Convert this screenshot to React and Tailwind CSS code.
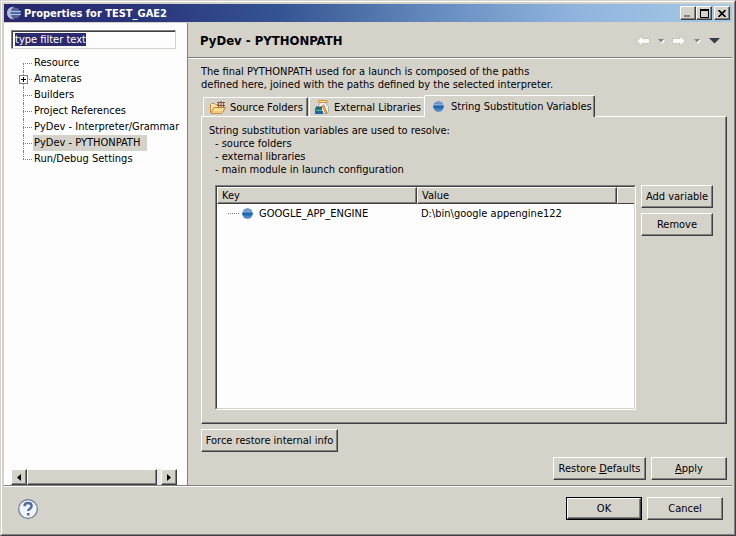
import React from "react";

const FACE = "bg-[#d5d2ca] border border-t-white border-l-white border-r-[#404040] border-b-[#404040] shadow-[inset_-1px_-1px_0_#808080]";

function Button({ children, className = "" }) {
  return (
    <button type="button" className={`${FACE} h-[23px] text-center leading-[13px] whitespace-nowrap ${className}`}>
      {children}
    </button>
  );
}

function EclipseLogo() {
  return (
    <svg width="14" height="14" viewBox="0 0 14 14" aria-hidden="true">
      <circle cx="8" cy="7" r="5.500" fill="#5a6199" />
      <path d="M7.500 0.500C3 0.500 0 3.300 0 7s3 6.500 7.500 6.500C4.800 12 3.800 9.600 3.800 7S4.800 2 7.500 .5z" fill="#b9bbd2" />
      <path d="M3 5.500h11M3 8.500h11" stroke="#9fc4e6" />
      <path d="M3 7h11" stroke="#4a6aa8" />
    </svg>
  );
}

function Sphere() {
  return (
    <svg width="11" height="11" viewBox="0 0 11 11" aria-hidden="true" className="shrink-0">
      <circle cx="5.500" cy="5.500" r="5.200" fill="#4a7fc0" />
      <path d="M1.500 2.500a5 5 0 0 1 8 0z" fill="#7d9fce" />
      <path d="M1 3.500h9" stroke="#8fadd8" />
      <path d="M.5 5h10v2H.5z" fill="#1e68b2" />
      <path d="M1 7h9v1H1z" fill="#2f78bd" />
      <path d="M2 9h7" stroke="#5a8ac4" />
    </svg>
  );
}

function PackageFolder() {
  return (
    <svg width="16" height="13" viewBox="0 0 16 13" aria-hidden="true" className="shrink-0">
      <path d="M.5 11.500V3.500l1-1h3l1 1h6v3" fill="#f9e3ae" stroke="#cf8d3c" />
      <path d="M1 12L4 6.500h11.500L12.500 11.500l-1 .8H1z" fill="#fbdc96" stroke="#c47e2e" />
      <path d="M3 10.500h9" stroke="#f5c978" />
      <path d="M8 1.500h6v4H8z" fill="#eed4ab" />
      <path d="M7 1.500h8M7 4.500h8M8.500 1v5M11 0v6M13.500 1v5" stroke="#70503f" strokeWidth=".9" fill="none" />
    </svg>
  );
}

function LibraryJar() {
  return (
    <svg width="14" height="14" viewBox="0 0 14 14" aria-hidden="true" className="shrink-0">
      <path d="M5 2.500h6v1.500l2.500 2.500v5.500L12 13.500H5L2.500 12V6.500L5 4z" fill="#f3f8fe" stroke="#91abd0" strokeWidth=".9" />
      <path d="M3.500.5h8.500v2H3.500z" fill="#fbe3a8" stroke="#d2913a" />
      <path d="M1 6.500h6v1.500H1z" fill="#2b4f7c" />
      <path d="M0 8h7v3H0z" fill="#16856a" />
      <path d="M1 10.500h6" stroke="#8fcdb5" strokeWidth=".6" />
      <path d="M0 11h8v3H0z" fill="#2463a6" />
      <path d="M6.800 5.500l2-.8L12.500 13l-2 .8z" fill="#f09a40" stroke="#cc7222" strokeWidth=".5" />
    </svg>
  );
}

function NavArrow({ flip = false }) {
  return (
    <svg width="14" height="12" viewBox="0 0 14 12" aria-hidden="true" className={flip ? "rotate-180" : ""}>
      <path d="M.7 6L6 .7v2.800h7.500v5H6v2.800z" fill="#fbfaf8" stroke="#b9b8b4" strokeWidth=".7" />
    </svg>
  );
}

function SmallDrop() {
  return (
    <svg width="7" height="5" viewBox="0 0 7 5" aria-hidden="true">
      <path d="M1 1h6L4 5z" fill="#fff" />
      <path d="M0 0h6L3 3.500z" fill="#858585" />
    </svg>
  );
}

const pages = [
  { name: "Resource" },
  { name: "Amateras", expandable: true },
  { name: "Builders" },
  { name: "Project References" },
  { name: "PyDev - Interpreter/Grammar" },
  { name: "PyDev - PYTHONPATH", selected: true },
  { name: "Run/Debug Settings" },
];

function TreeItem({ page, first, last }) {
  return (
    <li className="flex h-4 items-center whitespace-nowrap">
      <span className="relative ml-3 h-4 w-[10px] shrink-0">
        <span className={`absolute left-0 border-l border-dotted border-[#808080] ${first ? "top-2 bottom-0" : last ? "top-0 h-2" : "inset-y-0"}`} />
        <span className="absolute top-2 left-0 w-[9px] border-t border-dotted border-[#808080]" />
        {page.expandable && (
          <button type="button" aria-label="Expand" className="absolute top-1 -left-1 h-[9px] w-[9px] border border-[#808080] bg-white">
            <svg width="7" height="7" viewBox="0 0 7 7" className="block"><path d="M1 3.500h5M3.500 1v5" stroke="#000" /></svg>
          </button>
        )}
      </span>
      <a href="#page" className={`h-4 pl-px leading-4 ${page.selected ? "bg-[#d5d2ca] pr-[7px]" : ""}`}>{page.name}</a>
    </li>
  );
}

function Sidebar() {
  return (
    <aside className="flex w-[184px] shrink-0 flex-col border-r border-[#808080] bg-[#fdfdfd] pt-[7px] pl-[7px]">
      <input
        type="text"
        aria-label="Filter"
        defaultValue="type filter text"
        ref={(el) => { if (el) { el.focus(); el.select(); } }}
        className="h-[19px] w-[165px] border border-t-[#808080] border-l-[#808080] border-r-[#d5d2ca] border-b-[#d5d2ca] bg-[#fdfdfd] px-[3px] leading-[13px] shadow-[inset_1px_1px_0_#404040] outline-none selection:bg-[#2a2a6c] selection:text-white"
      />
      <ul className="mt-[6px] flex-1">
        {pages.map((p, i) => (
          <TreeItem key={p.name} page={p} first={i === 0} last={i === pages.length - 1} />
        ))}
      </ul>
      <div className="flex h-4 w-[166px] bg-[#eae8e4]">
        <button type="button" aria-label="Scroll left" className={`${FACE} flex h-4 w-4 items-center justify-center`}>
          <svg width="4" height="7" viewBox="0 0 4 7"><path d="M4 0v7L0 3.500z" /></svg>
        </button>
        <div className={`${FACE} mr-1 flex-1`} />
        <button type="button" aria-label="Scroll right" className={`${FACE} flex h-4 w-4 items-center justify-center`}>
          <svg width="4" height="7" viewBox="0 0 4 7"><path d="M0 0v7l4-3.500z" /></svg>
        </button>
      </div>
    </aside>
  );
}

const TAB = "flex items-center rounded-t-[2px] border-t border-l border-white border-r border-r-[#404040] whitespace-nowrap";
const TH = "h-[17px] border border-t-white border-l-white border-r-[#404040] border-b-[#404040] bg-[#d5d2ca] pl-1 text-left font-normal leading-[14px] shadow-[inset_-1px_-1px_0_#808080]";

export default function App() {
  return (
    <div className="flex min-h-screen w-full flex-col border border-t-[#d5d2ca] border-l-[#d5d2ca] border-r-[#404040] border-b-[#404040] bg-[#d5d2ca] font-['DejaVu_Sans_Condensed','DejaVu_Sans',sans-serif] text-[11px] leading-[13px] text-black [font-stretch:condensed]">
      <div className="flex flex-1 flex-col border border-t-white border-l-white border-r-[#808080] border-b-[#808080] pt-[2px] pr-[2px] pl-[2px]">
        <header className="flex h-[18px] items-center bg-[linear-gradient(90deg,#27276b_0%,#29347b_18%,#355493_38%,#6c92c4_62%,#8fb3dc_78%,#a6cae8_100%)] pr-[2px] pl-[3px]">
          <EclipseLogo />
          <h1 className="ml-[3px] flex-1 font-bold text-white">Properties for TEST_GAE2</h1>
          <button type="button" aria-label="Minimize" className={`${FACE} flex h-[14px] w-4 items-end pb-[2px] pl-[3px]`}>
            <svg width="6" height="2" viewBox="0 0 6 2"><path d="M0 0h6v2H0z" fill="#808080" /></svg>
          </button>
          <button type="button" aria-label="Maximize" className={`${FACE} flex h-[14px] w-4 items-center justify-center`}>
            <svg width="9" height="9" viewBox="0 0 9 9"><path d="M.5 1v7.500h8V1M0 1h9" fill="none" stroke="#000" /><path d="M0 0h9v2H0z" /></svg>
          </button>
          <button type="button" aria-label="Close" className={`${FACE} ml-[2px] flex h-[14px] w-4 items-center justify-center`}>
            <svg width="8" height="7" viewBox="0 0 8 7"><path d="M.5 0l7 7M7.500 0l-7 7" stroke="#000" strokeWidth="1.600" /></svg>
          </button>
        </header>

        <div className="mt-px flex flex-1">
          <Sidebar />
          <main className="flex min-w-0 flex-1 flex-col">
            <div className="flex h-[35px] items-center border-b border-[#808080] pr-3 pl-3 shadow-[0_1px_0_#fff]">
              <h2 className="flex-1 text-[13px] font-bold">PyDev - PYTHONPATH</h2>
              <nav className="flex items-center pt-[2px]">
                <button type="button" aria-label="Back" disabled><NavArrow /></button>
                <button type="button" aria-label="Back history" disabled className="ml-2"><SmallDrop /></button>
                <button type="button" aria-label="Forward" disabled className="ml-[7px]"><NavArrow flip /></button>
                <button type="button" aria-label="Forward history" disabled className="ml-2"><SmallDrop /></button>
                <button type="button" aria-label="Menu" className="ml-2">
                  <svg width="11" height="6" viewBox="0 0 11 6"><path d="M0 0h11L5.500 5.500z" fill="#383b48" /></svg>
                </button>
              </nav>
            </div>

            <div className="flex flex-1 flex-col pt-[7px] pr-[5px] pb-[5px] pl-[13px]">
              <p>
                The final PYTHONPATH used for a launch is composed of the paths
                <br />
                defined here, joined with the paths defined by the selected interpreter.
              </p>

              <div role="tablist" className="mt-[4px] flex items-end pl-[2px]">
                <button type="button" role="tab" aria-selected="false" className={`${TAB} h-[19px] w-[105px] pl-[6px] shadow-[inset_-1px_0_0_#808080]`}>
                  <PackageFolder />
                  <span className="ml-[4px]">Source Folders</span>
                </button>
                <button type="button" role="tab" aria-selected="false" className={`${TAB} ml-px h-[19px] w-[115px] border-r-0 pl-[5px]`}>
                  <LibraryJar />
                  <span className="ml-[5px]">External Libraries</span>
                </button>
                <button type="button" role="tab" aria-selected="true" className={`${TAB} z-10 -mb-px h-[22px] w-[171px] bg-[#d5d2ca] pl-2 shadow-[inset_-1px_0_0_#808080]`}>
                  <Sphere />
                  <span className="ml-[7px]">String Substitution Variables</span>
                </button>
              </div>

              <section role="tabpanel" className={`${FACE} flex flex-1 flex-col pt-[7px] pr-[13px] pb-[13px] pl-[7px]`}>
                <p>String substitution variables are used to resolve:</p>
                <ul className="pl-[6px]">
                  <li>- source folders</li>
                  <li>- external libraries</li>
                  <li>- main module in launch configuration</li>
                </ul>
                <div className="mt-[9px] flex flex-1 gap-[5px] pl-[6px]">
                  <div className="flex-1 border border-t-[#808080] border-l-[#808080] border-r-white border-b-white bg-[#fdfdfd]">
                    <div className="h-full border border-t-[#404040] border-l-[#404040] border-r-[#d5d2ca] border-b-[#d5d2ca]">
                      <table className="w-full table-fixed border-separate border-spacing-0">
                        <colgroup>
                          <col className="w-[200px]" />
                          <col className="w-[200px]" />
                          <col />
                        </colgroup>
                        <thead>
                          <tr>
                            <th className={TH}>Key</th>
                            <th className={TH}>Value</th>
                            <th className={`${TH} border-r-0 shadow-none`} />
                          </tr>
                        </thead>
                        <tbody>
                          <tr>
                            <td className="h-[18px] p-0 pl-[11px]">
                              <span className="flex items-center">
                                <span className="mr-[3px] w-[11px] border-t border-dotted border-[#808080]" />
                                <Sphere />
                                <span className="ml-[6px]">GOOGLE_APP_ENGINE</span>
                              </span>
                            </td>
                            <td className="p-0 pl-1">D:\bin\google appengine122</td>
                            <td className="p-0" />
                          </tr>
                        </tbody>
                      </table>
                    </div>
                  </div>
                  <div className="flex w-[72px] flex-col gap-[5px]">
                    <Button>Add variable</Button>
                    <Button>Remove</Button>
                  </div>
                </div>
              </section>

              <div className="mt-[5px] flex">
                <Button className="w-[137px]">Force restore internal info</Button>
              </div>
              <div className="mt-[5px] flex justify-end gap-[5px]">
                <Button className="w-[93px]">Restore <u>D</u>efaults</Button>
                <Button className="w-[76px]"><u>A</u>pply</Button>
              </div>
            </div>
          </main>
        </div>

        <footer className="flex h-[49px] items-center justify-between border-t border-[#808080] pr-[9px] pb-[3px] pl-[14px] shadow-[inset_0_1px_0_#fff]">
          <button type="button" aria-label="Help">
            <svg width="20" height="20" viewBox="0 0 20 20" className="block">
              <circle cx="10" cy="10" r="9.300" fill="#f1f3f6" stroke="#647a9e" strokeWidth="1.200" />
              <path d="M6.500 7.300C6.600 5 8 4 10 4s3.600 1.200 3.600 3c0 2.600-3.400 2.700-3.400 5" fill="none" stroke="#50699f" strokeWidth="2.400" />
              <path d="M9 14h2.500v2.500H9z" fill="#50699f" />
            </svg>
          </button>
          <div className="flex gap-[5px]">
            <button type="button" className="h-[23px] w-[76px] border border-black p-0">
              <span className={`${FACE} flex h-full items-center justify-center`}>OK</span>
            </button>
            <Button className="w-[76px]">Cancel</Button>
          </div>
        </footer>
      </div>
    </div>
  );
}
